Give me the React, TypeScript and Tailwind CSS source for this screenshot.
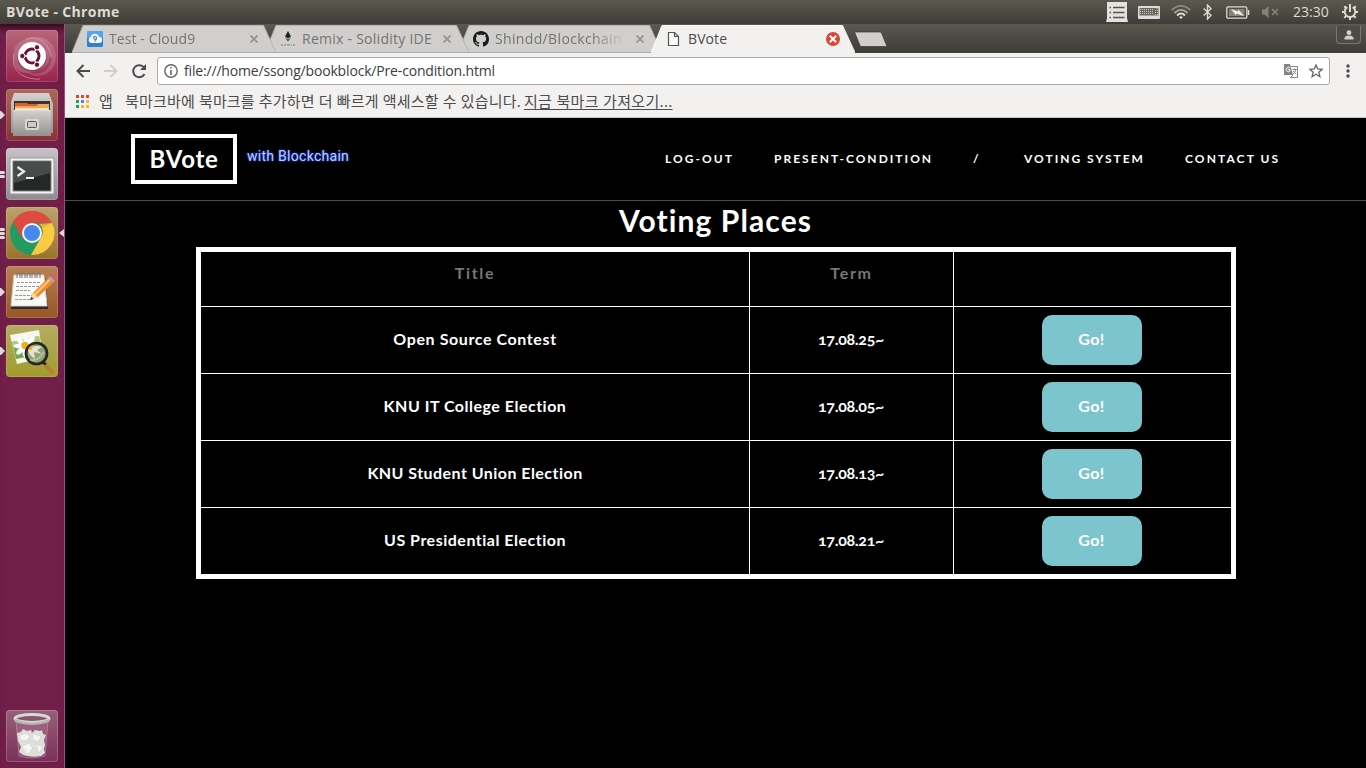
import React from "react";

type TabProps = {
  title: string;
  icon: React.ReactNode;
  titleClass: string;
  layer: string;
  active?: boolean;
};

function Tab({ title, icon, titleClass, layer, active = false }: TabProps) {
  return (
    <div className={`relative -mr-[11px] h-[29px] w-[204px] shrink-0 ${layer}`}>
      <svg className="absolute inset-0" width="204" height="29" viewBox="0 0 204 29">
        <path d="M0 29 L11 1.5 H191.500 L204 29 Z" fill={active ? "#f2f1f0" : "#d0cfcd"} />
        <path d="M0 28.500 L11 1.500 H191.500 L204 28.500" fill="none" stroke={active ? "#f8f8f7" : "#b5b4b1"} strokeWidth="1" />
        {!active && <path d="M0 28.500 H204" stroke="#aeadab" />}
      </svg>
      <div className="relative flex h-[29px] items-center pl-[15px] pr-[15px]">
        <div className="flex h-4 w-4 shrink-0 items-center justify-center">{icon}</div>
        <div className={`ml-[6px] shrink-0 overflow-hidden whitespace-nowrap text-[14px] leading-[20px] ${active ? "w-[140px] text-[#4c4c4c]" : "mr-[10px] w-[130px] text-[#747472] [mask-image:linear-gradient(to_right,#000_96px,transparent_130px)]"} ${titleClass}`}>
          {title}
        </div>
        {active ? (
          <svg className="-ml-[2px] shrink-0" width="14" height="14" viewBox="0 0 14 14">
            <circle cx="7" cy="7" r="7" fill="#db4437" />
            <path d="M3.800 3.800 L10.200 10.200 M10.200 3.800 L3.800 10.200" stroke="#fff" strokeWidth="2" />
          </svg>
        ) : (
          <svg className="ml-[1px] shrink-0" width="8" height="8" viewBox="0 0 8 8">
            <path d="M0.500 0.500 L7.500 7.500 M7.500 0.500 L0.500 7.500" stroke="#959492" strokeWidth="1.700" />
          </svg>
        )}
      </div>
    </div>
  );
}

const CloudIcon = () => (
  <svg width="16" height="16" viewBox="0 0 16 16">
    <rect width="16" height="16" rx="1.500" fill="#2f80dc" />
    <rect width="16" height="7" rx="1.500" fill="#55a3f2" />
    <path d="M4 12 a3 3 0 0 1 -.3 -5.800 a4.300 4.300 0 0 1 8.300 -.3 a3 3 0 0 1 .2 6.100 Z" fill="#fff" />
    <circle cx="8" cy="6.800" r="1.500" fill="none" stroke="#3c89dc" strokeWidth="1.200" />
    <path d="M9.500 7 Q9.500 9.500 7.500 10.500" fill="none" stroke="#3c89dc" strokeWidth="1.200" />
  </svg>
);

const RemixIcon = () => (
  <svg width="16" height="16" viewBox="0 0 16 16">
    <path d="M8 0 L11 5.500 L8 7.500 L5 5.500 Z" fill="#222" />
    <path d="M5 6.500 L8 8.500 L11 6.500 L8 10.500 Z" fill="#444" />
    <path d="M1 14 h2 m1 0 h2 m1 0 h3 m1 0 h1 m1 0 h2" stroke="#a3a2a0" strokeWidth="2" />
  </svg>
);

const GithubIcon = () => (
  <svg width="16" height="16" viewBox="0 0 16 16" fill="#1b1b1b">
    <path d="M8 0C3.580 0 0 3.580 0 8c0 3.540 2.290 6.530 5.470 7.590.4.070.55-.17.55-.38 0-.19-.01-.82-.01-1.490-2.010.37-2.530-.49-2.690-.94-.09-.23-.48-.94-.82-1.130-.28-.15-.68-.52-.01-.53.63-.01 1.080.58 1.230.82.72 1.210 1.870.87 2.330.66.07-.52.28-.87.51-1.070-1.780-.2-3.640-.89-3.640-3.950 0-.87.31-1.590.82-2.150-.08-.2-.36-1.020.08-2.120 0 0 .67-.21 2.200.82.64-.18 1.320-.27 2-.27s1.360.09 2 .27c1.530-1.040 2.200-.82 2.200-.82.44 1.100.16 1.920.08 2.120.51.56.82 1.270.82 2.150 0 3.070-1.870 3.750-3.650 3.950.29.25.54.73.54 1.480 0 1.070-.01 1.930-.01 2.200 0 .21.15.46.55.38A8 8 0 0 0 16 8c0-4.420-3.580-8-8-8Z" />
  </svg>
);

const PageIcon = () => (
  <svg width="16" height="16" viewBox="0 0 16 16">
    <path d="M2.500 1.500 H8.500 L12.500 5.500 V14.500 H2.500 Z M8.500 1.500 V5.500 H12.500" fill="#fafafa" stroke="#555" strokeWidth="1.200" />
  </svg>
);

function Indicators() {
  return (
    <div className="flex h-6 items-center">
      <svg width="22" height="20" viewBox="0 0 22 20">
        <path d="M1 0 H21 V16 L22 20 H0 L1 16 Z" fill="#e4e2df" />
        <path d="M3.500 5.500 h1.500 M7 5.500 H18.500 M3.500 10.500 h1.500 M7 10.500 H18.500 M3.500 15.500 h1.500 M7 15.500 H18.500" stroke="#55534c" strokeWidth="1.300" />
      </svg>
      <svg className="ml-[10px]" width="22" height="13" viewBox="0 0 22 13">
        <rect width="22" height="13" rx="1" fill="#dedcda" />
        <rect x="1.500" y="2" width="19" height="7.500" fill="#68665f" />
        <path d="M2 3.500 H16 M2 5.500 H16 M2 7.500 H16 M17 4.500 H20 M17 6.500 H20 M17 8.500 H20" stroke="#c8c6c1" strokeDasharray="1 1" />
        <path d="M18 2.500 h2" stroke="#6bad4b" strokeWidth="1" />
      </svg>
      <svg className="ml-[11px]" width="20" height="14" viewBox="0 0 20 14" fill="none" strokeWidth="1.800">
        <path d="M.7 5 Q10 -3.500 19.300 5" stroke="#8a8880" />
        <path d="M3.500 8 Q10 1.800 16.500 8" stroke="#aaa8a1" />
        <path d="M6 10.500 Q10 6.500 14 10.500" stroke="#dfdbd2" />
        <path d="M8 12 Q10 10.500 12 12 L10 14 Z" fill="#dfdbd2" stroke="none" />
      </svg>
      <svg className="ml-[12px]" width="9" height="16" viewBox="0 0 9 16">
        <path d="M.7 4.500 L8 11.300 L4.500 15 V1 L8 4.700 L.7 11.500" fill="none" stroke="#dfdbd2" strokeWidth="1.400" />
      </svg>
      <svg className="ml-[14px]" width="24" height="13" viewBox="0 0 24 13">
        <rect x=".8" y=".8" width="20" height="11.400" rx="1.200" fill="none" stroke="#dfdbd2" strokeWidth="1.300" />
        <rect x="3" y="3" width="15.500" height="7" fill="#85837b" />
        <path d="M22.500 4 V9" stroke="#dfdbd2" strokeWidth="1.600" />
        <path d="M5 3 L12 5.500 L12.500 3.500 L18 10 L10.500 7.500 L10 9.500 Z" fill="#efede7" />
      </svg>
      <svg className="ml-[11px]" width="18" height="12" viewBox="0 0 18 12">
        <path d="M1 3.500 H3.500 L7.500 0 V12 L3.500 8.500 H1 Z" fill="#85837b" />
        <path d="M11 3 L17 9 M17 3 L11 9" stroke="#85837b" strokeWidth="1.600" />
      </svg>
      <span className="ml-[14px] mb-[1px] w-[37px] whitespace-nowrap text-[14px] text-[#dfdbd2]">23:30</span>
      <svg className="ml-[11px]" width="18" height="18" viewBox="0 0 18 18" fill="none" stroke="#dfdbd2">
        <path d="M6.300 4.200 A5.300 5.300 0 1 0 11.700 4.200" strokeWidth="2" />
        <path d="M9 1 V9" strokeWidth="2" />
        <path d="M14.200 9 H17 M1 9 H3.800 M12.700 12.700 L14.700 14.700 M5.300 12.700 L3.300 14.700 M9 14 V17 M13 5 L14.700 3.300 M5 5 L3.300 3.300" strokeWidth="2" />
      </svg>
    </div>
  );
}

const UbuntuArt = () => (
  <svg width="52" height="52" viewBox="0 0 52 52">
    <path d="M8 32 C3 12 22 4 36 11 C48 18 47 34 34 40 C14 48 9 38 8 32" fill="#fff" fillOpacity=".16" />
    <path d="M20 9 C36 5 47 17 45 31 C42 44 28 47 18 40 C30 52 50 44 50 27 C50 12 36 2 20 9 Z" fill="#fff" fillOpacity=".16" />
    <path d="M8 24 C4 41 18 50 34 49 M20 9 C34 5 44 15 45 27" fill="none" stroke="#f2bfca" strokeOpacity=".5" strokeWidth="1" />
    <circle cx="26" cy="27" r="14.500" fill="#4a0d27" fillOpacity=".35" />
    <circle cx="26" cy="26" r="14" fill="#fff" />
    <circle cx="26" cy="26" r="7" fill="none" stroke="#6b1438" strokeWidth="3" />
    <path d="M26 26 H14 M26 26 L32 15.600 M26 26 L32 36.400" stroke="#fff" strokeWidth="1.400" />
    <circle cx="26" cy="26" r="5.200" fill="#fff" />
    <g fill="#6b1438" stroke="#fff" strokeWidth="1"><circle cx="16.300" cy="26" r="2.700" /><circle cx="31" cy="17.300" r="2.700" /><circle cx="31" cy="34.700" r="2.700" /></g>
  </svg>
);

const FilesArt = () => (
  <svg width="52" height="52" viewBox="0 0 52 52">
    <defs><linearGradient id="steel" x2="0" y2="1"><stop stopColor="#d2d1d0" /><stop offset="1" stopColor="#929190" /></linearGradient></defs>
    <path d="M8 4 H43 L47 15 V44 H5 V13 Z" fill="url(#steel)" />
    <rect x="8" y="12" width="36" height="11" fill="#3b332d" />
    <path d="M9 14 H21 L22 15 H43 V23 H9 Z" fill="#d7602f" />
    <path d="M9 17 H31 L32 15 H43 V23 H9 Z" fill="#f0a653" />
    <rect x="9" y="19" width="34" height="4" fill="#f9e3bd" />
    <path d="M7 21 H45 V47 H7 Z" fill="url(#steel)" />
    <path d="M7 21.500 H45" stroke="#dddcdb" />
    <rect x="19" y="30" width="14" height="11" rx="2" fill="#d8d7d6" />
    <rect x="21.500" y="32.500" width="9" height="6" rx="1" fill="#ccc" stroke="#555" />
  </svg>
);

const TerminalArt = () => (
  <svg width="52" height="52" viewBox="0 0 52 52">
    <path d="M4 10 H48 V46 H4 Z" fill="#f2f2f2" stroke="#999" />
    <rect x="7" y="13" width="38" height="30" fill="#252827" stroke="#888" />
    <path d="M8 14 H44 V25 L8 35 Z" fill="#727574" fillOpacity=".45" />
    <path d="M11.500 19 L18 23.500 L11.500 28" fill="none" stroke="#eee" strokeWidth="2.200" />
    <path d="M20 30 H28" stroke="#eee" strokeWidth="2" />
  </svg>
);

const ChromeArt = () => (
  <svg width="52" height="52" viewBox="0 0 52 52">
    <circle cx="26" cy="26" r="22" fill="#229b61" />
    <path d="M7 15 A22 22 0 0 1 46 16 H26 L16.500 31.500 Z" fill="#dc4a40" />
    <path d="M46 16 A22 22 0 0 1 25 48 L34.700 31 A10 10 0 0 0 33 17 Z" fill="#fbca43" />
    <path d="M26 16 H46 L35 21 Z" fill="#a96826" fillOpacity=".28" />
    <circle cx="26" cy="26" r="10" fill="#f5f5f5" />
    <circle cx="26" cy="26" r="8" fill="#4788ed" />
  </svg>
);

const EditorArt = () => (
  <svg width="52" height="52" viewBox="0 0 52 52">
    <path d="M9 10 H39 L42 43 H5 Z" fill="#35271e" />
    <path d="M8 9 H38 L41 40 H5 Z" fill="#fafaf8" stroke="#cfcfc8" />
    <path d="M11 16.500 H35 M10 20.500 H35 M10 24.500 H24 M9 29.500 H30 M9 33.500 H25" stroke="#9b9b97" strokeDasharray="3 1" />
    <path d="M11 12 V8 q1.500 -2 3 0 v4 M16 12 V8 q1.500 -2 3 0 v4 M21 12 V8 q1.500 -2 3 0 v4 M26 12 V8 q1.500 -2 3 0 v4 M31 12 V8 q1.500 -2 3 0 v4" fill="none" stroke="#77776f" strokeWidth="1.100" />
    <path d="M24 34 L27 27 L42 12 L47 17 L32 31 Z" fill="#ee8d2e" />
    <path d="M28 28 L43 13 L44.500 14.500 L29.500 29.500 Z" fill="#ffc476" />
    <path d="M24 34 L27 27 L32 31 Z" fill="#f5d6a3" /><path d="M24 34 l1.500 -3 l2 2 Z" fill="#222" />
    <path d="M42 12 L44 10 L49 14 L47 17 Z" fill="#aaa" /><path d="M44 10 q4 -3 6 0 q0 4 -2 4 Z" fill="#e45869" />
  </svg>
);

const PhotoArt = () => (
  <svg width="52" height="52" viewBox="0 0 52 52">
    <path d="M4 10 L33 5 L37 33 L11 39 Z" fill="#f5f6f1" />
    <path d="M6 17 L33 11 L36 29 L10 34 Z" fill="#75a843" />
    <path d="M6 17 L33 11 L34 17 L7 22 Z" fill="#a9cd7a" />
    <g fill="#fff"><ellipse cx="20" cy="15" rx="2.500" ry="5" /><ellipse cx="19" cy="27" rx="2.500" ry="5" /><ellipse cx="13" cy="21" rx="5.500" ry="2.300" /><ellipse cx="27" cy="19" rx="6" ry="2.500" /><ellipse cx="14.500" cy="16.500" rx="2.500" ry="4.500" transform="rotate(-40 14.500 16.500)" /><ellipse cx="25" cy="15" rx="2.500" ry="4.500" transform="rotate(45 25 15)" /><ellipse cx="14" cy="26" rx="2.500" ry="4.500" transform="rotate(45 14 26)" /></g>
    <circle cx="19" cy="20.500" r="3.700" fill="#f3ae20" />
    <circle cx="30.500" cy="28.500" r="10.500" fill="#8fa46f" stroke="#262626" strokeWidth="2.700" />
    <path d="M22 25 Q28 19 36 22 L31 25 L36 29 L28 27 L29 34 L24 30 Z" fill="#f0f1ea" fillOpacity=".85" />
    <path d="M22 25 Q23 21 27 20 L26 25 Z" fill="#eeb12f" />
    <path d="M24 35 Q32 37 38 27" fill="none" stroke="#c8d0b8" strokeOpacity=".6" strokeWidth="2" />
    <path d="M37 37 L40 40" stroke="#202020" strokeWidth="3" /><path d="M40 41 L46 47" stroke="#c07a35" strokeWidth="3.500" strokeLinecap="round" />
  </svg>
);

const TrashArt = () => (
  <svg width="52" height="52" viewBox="0 0 52 52">
    <path d="M10 11 H42 L39 46 Q26 50 13 46 Z" fill="#e9c5d7" fillOpacity=".15" stroke="#d3b3c1" strokeOpacity=".4" />
    <path d="M11 23 l4 -1 l2 -3 l4 2 l4 -1 l1 3 l3 -3 l5 1 l2 -1 l1 4 l3 1 l-2 5 l1 5 l-1 4 l1 4 l-4 3 q-9 2 -18 -1 l-4 -3 l2 -5 l-3 -6 Z" fill="#dededb" />
    <path d="M14 25 l6 -2 l4 4 l-4 4 l-5 -1 M28 24 l7 2 l-2 6 l-6 -2 M16 36 l7 -3 l4 5 l-5 6 M31 34 l6 3 l-4 6" fill="#f4f4f2" stroke="#cfcfcc" strokeWidth=".7" />
    <ellipse cx="26" cy="8.500" rx="17" ry="4" fill="#85566d" stroke="#d8d8d5" strokeWidth="3" />
    <path d="M9 9 Q26 16 43 9 V12 Q26 18 9 12 Z" fill="#b8b8b4" />
  </svg>
);

const launchers = [
  { label: "Dash", art: <UbuntuArt />, tile: "from-[#b76679] to-[#98224f]", pips: 0 },
  { label: "Files", art: <FilesArt />, tile: "from-[#ad6658] to-[#8b3038]", pips: 1 },
  { label: "Terminal", art: <TerminalArt />, tile: "from-[#c7c2c6] to-[#908a8f]", pips: 2 },
  { label: "Chrome", art: <ChromeArt />, tile: "from-[#bda16b] to-[#98742c]", pips: 3 },
  { label: "Editor", art: <EditorArt />, tile: "from-[#b98156] to-[#975624]", pips: 1 },
  { label: "Photos", art: <PhotoArt />, tile: "from-[#b4ad61] to-[#a19b2b]", pips: 1 },
];

function Launcher() {
  return (
    <aside className="flex w-[65px] shrink-0 flex-col border-r border-[#985287] bg-[#711f49] pt-[6px] pb-[6px] shadow-[inset_0_9px_7px_-5px_#35091f]">
      <div className="flex flex-col gap-[7px]">
        {launchers.map((item) => (
          <div key={item.label} className="flex h-[52px] items-center">
            <div className="flex w-[6px] flex-col gap-px">
              {item.pips === 1 && (
                <svg width="5" height="8" viewBox="0 0 5 8"><path d="M0 0 H1 L5 4 L1 8 H0 Z" fill="#dedbdc" /></svg>
              )}
              {item.pips > 1 && Array.from({ length: item.pips }, (_, i) => <div key={i} className="h-[3px] w-[5px] rounded-r-xs bg-[#dedbdc]" />)}
            </div>
            <div className={`h-[52px] w-[52px] overflow-hidden rounded-[4px] bg-linear-to-b shadow-[inset_0_0_0_1px_rgba(255,255,255,0.15)] ${item.tile}`}>{item.art}</div>
            {item.label === "Chrome" && (
              <svg className="ml-px" width="5" height="8" viewBox="0 0 5 8"><path d="M5 0 L0 4 L5 8 Z" fill="#dedbdc" /></svg>
            )}
          </div>
        ))}
      </div>
      <div className="mt-auto ml-[6px] h-[52px] w-[52px] rounded-[4px] bg-linear-to-b from-[#966079] to-[#7c3059] shadow-[inset_0_0_0_1px_rgba(255,255,255,0.2)]"><TrashArt /></div>
    </aside>
  );
}

const dotRows = [
  ["bg-[#ea4335]", "bg-[#ea4335]", "bg-[#ea4335]"],
  ["bg-[#249f5c]", "bg-[#4285f4]", "bg-[#f9b916]"],
  ["bg-[#249f5c]", "bg-[#f9b916]", "bg-[#f9b916]"],
];

function Toolbar() {
  return (
    <div className="h-[65px] border-b border-[#c8c7c5] bg-[#f2f1f0]">
      <div className="flex h-[36px] items-center pl-[11px]">
        <svg width="14" height="14" viewBox="0 0 14 14"><path d="M14 7 H1.500 M7.500 1 L1.500 7 L7.500 13" fill="none" stroke="#4b4b4b" strokeWidth="2" /></svg>
        <svg className="ml-[14px]" width="14" height="14" viewBox="0 0 14 14"><path d="M0 7 H12.500 M6.500 1 L12.500 7 L6.500 13" fill="none" stroke="#d0cfce" strokeWidth="2" /></svg>
        <svg className="ml-[13px]" width="16" height="16" viewBox="0 0 16 16"><path d="M13.500 11 A6 6 0 1 1 13 4.500" fill="none" stroke="#4b4b4b" strokeWidth="2" /><path d="M15 1 V7 H9 Z" fill="#4b4b4b" /></svg>
        <div className="ml-[10px] flex h-[28px] w-[1173px] items-center rounded-[3px] border border-[#aaa9a7] bg-white pl-[6px] pr-[6px]">
          <svg width="14" height="14" viewBox="0 0 14 14"><circle cx="7" cy="7" r="6.200" fill="none" stroke="#656565" strokeWidth="1.400" /><path d="M7 3 V4.600 M7 6 V11" stroke="#656565" strokeWidth="1.600" /></svg>
          <span className="mb-[2px] ml-[6px] whitespace-nowrap text-[14px] tracking-[-0.17px] text-[#3c3c3c]">file:///home/ssong/bookblock/Pre-condition.html</span>
          <svg className="ml-auto" width="14" height="14" viewBox="0 0 14 14">
            <path d="M0 0 H6 L9 11 H0 Z" fill="#858585" /><path d="M7 2.500 H13.500 V13.500 H6.500 L9 11" fill="none" stroke="#858585" />
            <path d="M6 4 A2.200 2.200 0 1 0 6 7 V5.700 H4" fill="none" stroke="#fff" /><path d="M8.500 5.500 H12.500 M10.500 4.500 V5.500 M12 5.500 Q11 9 9 10 M9 7 L12 10" fill="none" stroke="#858585" />
          </svg>
          <svg className="ml-[11px]" width="14" height="14" viewBox="0 0 14 14"><path d="M7 .9 L8.700 5 L13.200 5.300 L9.800 8.200 L10.900 12.700 L7 10.300 L3.100 12.700 L4.200 8.200 L.8 5.300 L5.300 5 Z" fill="none" stroke="#656565" strokeWidth="1.300" /></svg>
        </div>
        <svg className="ml-[16px]" width="4" height="14" viewBox="0 0 4 14" fill="#4b4b4b"><circle cx="2" cy="2" r="1.700" /><circle cx="2" cy="7" r="1.700" /><circle cx="2" cy="12" r="1.700" /></svg>
      </div>
      <div className="flex h-[24px] items-center pl-[11px] font-['Noto_Sans','Noto_Sans_CJK_KR',sans-serif] text-[15px] leading-[20px] text-[#4c4c4c]">
        <div className="flex flex-col gap-[2px]">
          {dotRows.map((row, r) => <div key={r} className="flex gap-[2px]">{row.map((dot, c) => <div key={c} className={`h-[3px] w-[3px] ${dot}`} />)}</div>)}
        </div>
        <span className="ml-[10px] w-[26px]">앱</span>
        <span className="whitespace-nowrap tracking-[0.17px]">북마크바에 북마크를 추가하면 더 빠르게 액세스할 수 있습니다.</span>
        <span className="ml-[3px] whitespace-nowrap tracking-[0.33px] underline underline-offset-2">지금 북마크 가져오기...</span>
      </div>
    </div>
  );
}

const rows = [
  { title: "Open Source Contest", term: "17.08.25~", titleClass: "tracking-[0.6px]" },
  { title: "KNU IT College Election", term: "17.08.05~", titleClass: "tracking-[0.5px]" },
  { title: "KNU Student Union Election", term: "17.08.13~", titleClass: "tracking-[0.46px]" },
  { title: "US Presidential Election", term: "17.08.21~", titleClass: "tracking-[0.5px]" },
];

function VotingPage() {
  return (
    <main className="min-h-0 flex-1 bg-black font-['Lato',sans-serif] font-bold text-white">
      <header className="flex h-[83px] items-start border-b border-[#4b4b4b] pl-[66px] pt-[16px]">
        <div className="flex h-[50px] w-[106px] items-center justify-center border-4 border-white text-[24px] leading-none">
          <span className="tracking-[0.7px]">BVote</span>
        </div>
        <div className="ml-[10px] mt-[12px] h-[20px] w-[103px] whitespace-nowrap font-['Roboto',sans-serif] text-[14px] font-normal leading-[20px] tracking-[0.28px] text-[#b4c8ff] [text-shadow:0_0_2px_#2447dd,0_0_2px_#2447dd]">
          with Blockchain
        </div>
        <nav className="ml-[315px] mt-[15px] flex whitespace-nowrap text-[12px] leading-[20px]">
          <span className="w-[109px] tracking-[2.05px]">LOG-OUT</span>
          <span className="w-[199px] tracking-[2.02px]">PRESENT-CONDITION</span>
          <span className="w-[51px]">/</span>
          <span className="w-[161px] tracking-[2px]">VOTING SYSTEM</span>
          <span className="tracking-[2.1px]">CONTACT US</span>
        </nav>
      </header>
      <h1 className="h-[46px] text-center text-[30px] leading-[38px] tracking-[1.1px]">Voting Places</h1>
      <div className="ml-[131px] w-[1040px] border-[5px] border-white text-center text-[16px]">
        <div className="grid h-[54px] grid-cols-[548px_204px_278px] text-[#777] tracking-[1.7px]">
          <div className="pt-[9px]">Title</div>
          <div className="border-l border-white pt-[9px]">Term</div>
          <div className="border-l border-white" />
        </div>
        {rows.map((row) => (
          <div key={row.title} className="grid h-[67px] grid-cols-[548px_204px_278px] border-t border-white">
            <div className="flex items-center justify-center pb-[2px]"><span className={row.titleClass}>{row.title}</span></div>
            <div className="flex items-center justify-center border-l border-white pr-[1px] pb-[2px]"><span className="oldstyle-nums tracking-[-0.3px]">{row.term}</span></div>
            <div className="flex items-center justify-center border-l border-white pr-[2px]">
              <button className="h-[50px] w-[100px] rounded-[10px] bg-[#7cc4ce] pb-[2px] font-bold tracking-[0.4px]">Go!</button>
            </div>
          </div>
        ))}
      </div>
    </main>
  );
}

export default function App() {
  return (
    <div className="flex h-[768px] w-[1366px] flex-col overflow-hidden bg-black font-['Open_Sans','Noto_Sans_CJK_KR',sans-serif]">
      <div className="flex h-6 shrink-0 items-center justify-between bg-linear-to-b from-[#5b594f] to-[#3e3d38] pl-[6px] pr-[7px]">
        <span className="mb-[2px] text-[14px] font-bold tracking-[0.37px] text-[#dfdbd2]">BVote - Chrome</span>
        <Indicators />
      </div>
      <div className="flex min-h-0 flex-1">
        <Launcher />
        <div className="flex min-w-0 flex-1 flex-col">
          <div className="flex h-[29px] shrink-0 bg-linear-to-b from-[#5b594f] to-[#3c3b37] pl-[7px]">
            <Tab title="Test - Cloud9" icon={<CloudIcon />} titleClass="tracking-[0.1px]" layer="z-30" />
            <Tab title="Remix - Solidity IDE" icon={<RemixIcon />} titleClass="tracking-[0.26px] [mask-image:none]" layer="z-20" />
            <Tab title="Shindd/Blockchain_" icon={<GithubIcon />} titleClass="tracking-[0.35px]" layer="z-10" />
            <Tab title="BVote" icon={<PageIcon />} titleClass="tracking-[0.1px]" layer="z-40" active />
            <svg className="ml-[10px] mt-[7px]" width="34" height="17" viewBox="0 0 34 17"><path d="M.5 1 H26 Q27 1 27.500 2 L33 15.500 H8 Q6.500 15.500 6 14.500 Z" fill="#d0cfcd" stroke="#38372f" strokeWidth=".7" /></svg>
            <div className="mt-[2px] mr-[5px] ml-auto flex h-[18px] w-[25px] items-center justify-center rounded-b-[4px] border border-t-0 border-[#7a786f] bg-[#4c4b44]">
              <svg width="10" height="10" viewBox="0 0 10 10" fill="#d3d0c9"><circle cx="5" cy="2.700" r="2.400" /><path d="M.5 9.500 V7.500 Q1.500 5.500 5 5.500 T9.500 7.500 V9.500 Z" /></svg>
            </div>
          </div>
          <Toolbar />
          <VotingPage />
        </div>
      </div>
    </div>
  );
}
